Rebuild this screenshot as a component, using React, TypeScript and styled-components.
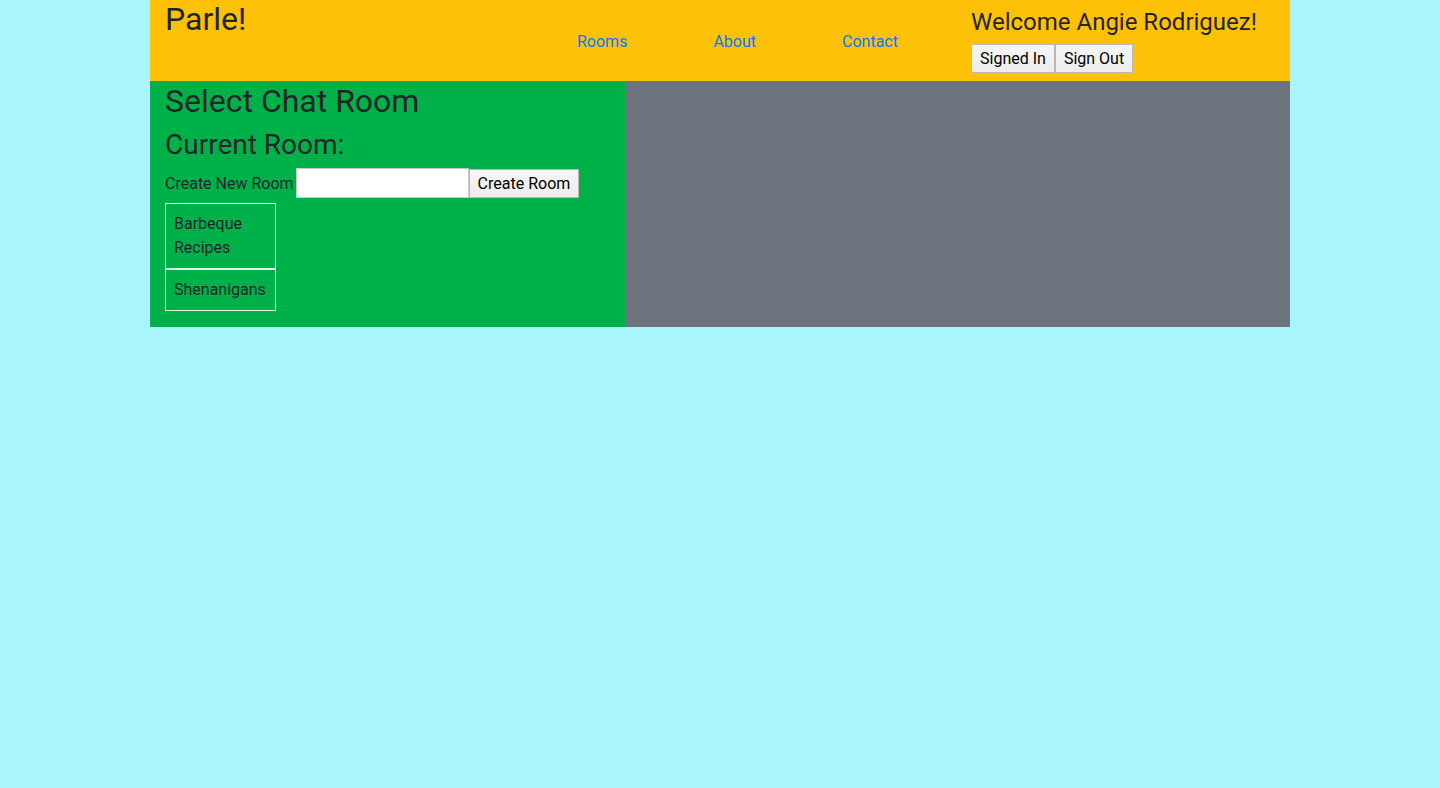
import React from 'react';
import styled, { createGlobalStyle } from 'styled-components';

const GlobalStyle = createGlobalStyle`
    * { box-sizing: border-box; }
    body {
        margin: 0;
        background-color: #a8f5fb;
        color: #212529;
        font-family: Roboto, "Noto Sans", sans-serif;
        font-size: 16px;
        line-height: 1.5;
    }
`;

const StyledContainer = styled.div`
    width: 1140px;
    margin: 0 auto;
`;

const StyledHeader = styled.header`
    display: grid;
    grid-template-columns: 412px 394px 1fr;
    height: 81px;
    padding-left: 15px;
    background-color: #ffc107;
`;

const StyledBrand = styled.h2`
    margin: 0;
    font-size: 32px;
    font-weight: 400;
    line-height: 1.2;
`;

const StyledNav = styled.nav`
    display: flex;
    align-items: center;
    gap: 86px;
    padding-top: 3px;
`;

const StyledNavLink = styled.a`
    color: #007bff;
    text-decoration: none;
`;

const StyledUser = styled.div`
    padding-top: 8px;
`;

const StyledWelcome = styled.h4`
    margin: 0 0 7px;
    font-size: 24px;
    font-weight: 400;
    line-height: 1.2;
`;

const StyledButton = styled.button`
    font-family: inherit;
    font-size: 16px;
    line-height: 19px;
    color: #000;
    padding: 4px 8px;
    background: linear-gradient(#f6f6f6, #ececec);
    border: 1px solid #b8b8b8;
    border-radius: 0;
`;

const StyledRow = styled.main`
    display: grid;
    grid-template-columns: 475px 1fr;
`;

const StyledSidebar = styled.section`
    background-color: #00b14a;
    padding: 1px 15px 16px;
`;

const StyledPanel = styled.section`
    background-color: #6c757d;
`;

const StyledTitle = styled.h2<{ $size: number; $gap: number }>`
    margin: 0 0 ${p => p.$gap}px;
    font-size: ${p => p.$size}px;
    font-weight: 400;
    line-height: 1.2;
`;

const StyledForm = styled.form`
    display: flex;
    align-items: center;
    height: 31px;
    margin-bottom: 4px;
`;

const StyledLabel = styled.label`
    padding-top: 1px;
    margin-right: 2px;
`;

const StyledInput = styled.input`
    width: 173px;
    height: 30px;
    border: 1px solid #c8c8c8;
    background: #fff;
    font-family: inherit;
`;

const StyledRoomList = styled.ul`
    list-style: none;
    margin: 0;
    padding: 0;
    width: 111px;
`;

const StyledRoom = styled.li`
    border: 1px solid #e6f7ec;
    padding: 8px;
`;

const rooms = ['Barbeque Recipes', 'Shenanigans'];

function App() {
    const [ name, setName ] = React.useState('');
  return (
    <StyledContainer>
        <GlobalStyle />
        <StyledHeader>
            <StyledBrand>Parle!</StyledBrand>
            <StyledNav>
                <StyledNavLink href="#">Rooms</StyledNavLink>
                <StyledNavLink href="#">About</StyledNavLink>
                <StyledNavLink href="#">Contact</StyledNavLink>
            </StyledNav>
            <StyledUser>
                <StyledWelcome>Welcome Angie Rodriguez!</StyledWelcome>
                <StyledButton>Signed In</StyledButton>
                <StyledButton>Sign Out</StyledButton>
            </StyledUser>
        </StyledHeader>
        <StyledRow>
            <StyledSidebar>
                <StyledTitle $size={32} $gap={8}>Select Chat Room</StyledTitle>
                <StyledTitle as="h3" $size={28} $gap={6}>Current Room:</StyledTitle>
                <StyledForm onSubmit={ e => e.preventDefault() }>
                    <StyledLabel>Create New Room</StyledLabel>
                    <StyledInput
                        value={ name }
                        onChange={ e => setName( e.target.value ) }
                    />
                    <StyledButton type="submit">Create Room</StyledButton>
                </StyledForm>
                <StyledRoomList>
                    { rooms.map( room => <StyledRoom key={ room }>{ room }</StyledRoom> ) }
                </StyledRoomList>
            </StyledSidebar>
            <StyledPanel />
        </StyledRow>
    </StyledContainer>
  );
}

export default App;
